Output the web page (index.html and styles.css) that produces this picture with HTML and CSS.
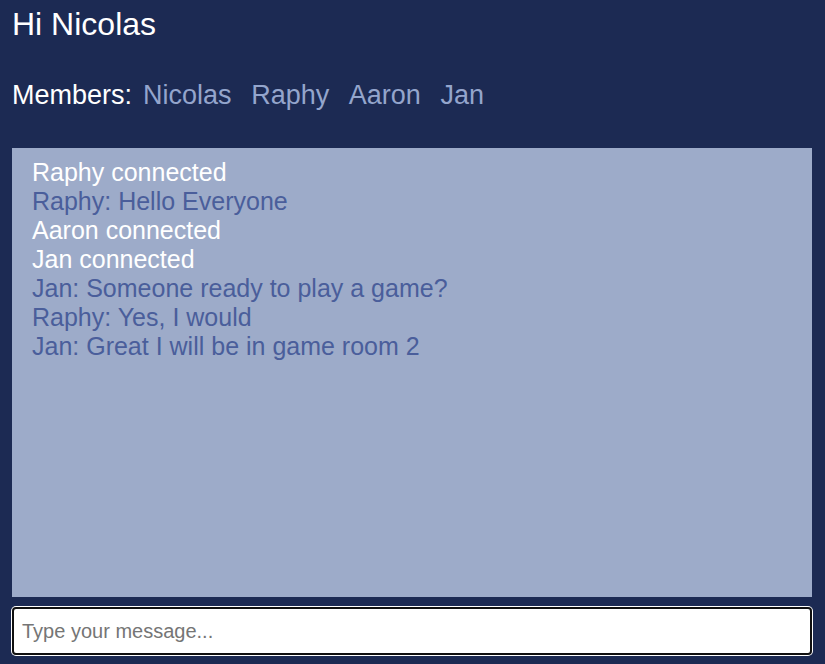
FILE: index.html
```html
<!DOCTYPE html>
<html lang="en">
<head>
<meta charset="utf-8">
<title>Chat</title>
<link rel="stylesheet" href="styles.css">
</head>
<body>
<header class="header">
  <h1 class="greeting">Hi Nicolas</h1>
  <div class="members">
    <span class="members-label">Members:</span>
    <span class="member">Nicolas</span>
    <span class="member">Raphy</span>
    <span class="member">Aaron</span>
    <span class="member">Jan</span>
  </div>
</header>
<main class="chat">
  <ul class="messages">
    <li class="msg msg-system">Raphy connected</li>
    <li class="msg">Raphy: Hello Everyone</li>
    <li class="msg msg-system">Aaron connected</li>
    <li class="msg msg-system">Jan connected</li>
    <li class="msg">Jan: Someone ready to play a game?</li>
    <li class="msg">Raphy: Yes, I would</li>
    <li class="msg">Jan: Great I will be in game room 2</li>
  </ul>
  <input class="composer" type="text" placeholder="Type your message...">
</main>
</body>
</html>
```

FILE: styles.css
```css
html, body {
  margin: 0;
  padding: 0;
}
body {
  background: #1c2a53;
  font-family: "Liberation Sans", Arial, sans-serif;
  color: #ffffff;
  width: 825px;
  height: 664px;
  overflow: hidden;
}
.header {
  padding: 6px 12px 0 12px;
}
.greeting {
  margin: 0;
  font-size: 32px;
  font-weight: normal;
  line-height: 37px;
}
.members {
  display: flex;
  align-items: baseline;
  gap: 19.6px;
  margin-top: 37px;
  font-size: 27px;
  line-height: 31px;
}
.members-label {
  margin-right: -8.6px;
}
.member {
  color: #94a5cc;
}
.chat {
  padding: 37px 13px 0 12px;
}
.messages {
  list-style: none;
  margin: 0;
  height: 449px;
  box-sizing: border-box;
  padding: 10px 20px;
  background: #9dabc9;
  font-size: 25px;
  line-height: 29px;
}
.msg {
  color: #4a5e9b;
}
.msg-system {
  color: #ffffff;
}
.composer {
  display: block;
  box-sizing: border-box;
  width: 100%;
  height: 48px;
  margin-top: 10px;
  padding: 0 8px;
  border: 2px solid #101010;
  border-radius: 4px;
  box-shadow: 0 0 0 1px #ffffff;
  background: #ffffff;
  font-family: "Liberation Sans", Arial, sans-serif;
  font-size: 20px;
  color: #222;
  outline: none;
}
.composer::placeholder {
  color: #757575;
}
```
